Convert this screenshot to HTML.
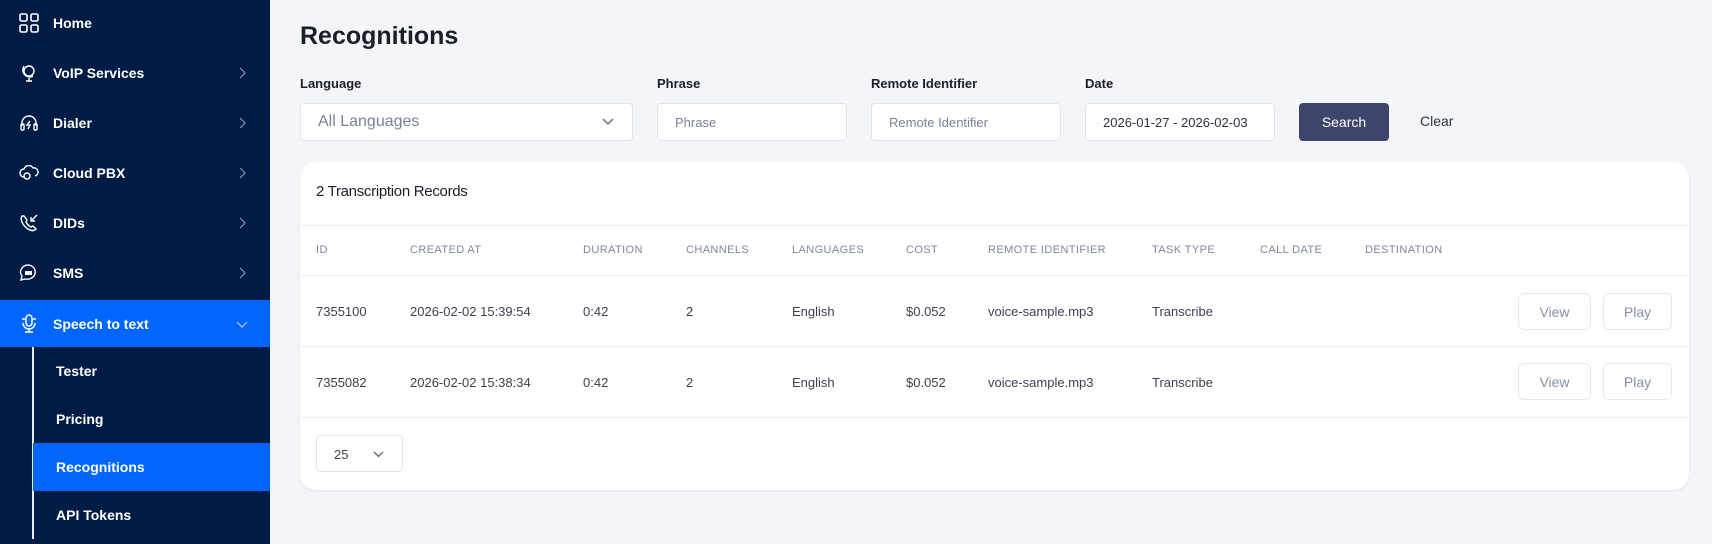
<!DOCTYPE html>
<html><head><meta charset="utf-8"><style>
*{box-sizing:border-box;margin:0;padding:0}
body{width:1712px;height:544px;overflow:hidden;background:#f4f5f9;font-family:"Liberation Sans",sans-serif;position:relative}
.sb{position:absolute;left:0;top:0;width:270px;height:544px;background:#011c44}
.it{position:absolute;left:0;width:270px;height:48px;color:#fff;font-weight:bold;font-size:14px;display:flex;align-items:center}
.it .ic{position:absolute;left:19px;top:14px;width:20px;height:20px}
.it .tx{position:absolute;left:53px}
.it .ch{position:absolute;left:236px;top:18px;width:12px;height:12px}
.sub{position:absolute;left:33px;width:237px;height:48px;color:#fff;font-weight:bold;font-size:14px;display:flex;align-items:center;padding-left:23px}
.vl{position:absolute;left:32px;top:347px;width:2px;height:192px;background:#e8ecf3}
.a{position:absolute}
h1{position:absolute;left:300px;top:22px;font-size:25px;font-weight:bold;color:#1c1f2a}
.lbl{position:absolute;top:76px;font-size:13px;font-weight:bold;color:#1c1f2a}
.inp{position:absolute;top:103px;height:38px;background:#fff;border:1px solid #e2e5ec;border-radius:4px;font-size:14px;color:#7a8296;padding:0 17px;display:flex;align-items:center}
.card{position:absolute;left:300px;top:162px;width:1389px;height:328px;background:#fff;border-radius:16px;box-shadow:0 1px 2px rgba(0,0,0,.08)}
.hl{position:absolute;left:300px;width:1389px;height:1px;background:#ebeef3}
.th{position:absolute;top:244px;font-size:11px;color:#7d879c;letter-spacing:.4px}
.td{position:absolute;font-size:13px;color:#3e4250}
.btn{position:absolute;height:37px;border:1px solid #e4e8ef;border-radius:6px;background:#fff;color:#868fa3;font-size:14px;display:flex;align-items:center;justify-content:center}
</style></head><body>
<div class="sb">
<div class="it" style="top:-1px"><svg class="ic" viewBox="0 0 20 20" fill="none" stroke="#fff" stroke-width="1.6"><rect x="1" y="1" width="7" height="7" rx="1.5"/><rect x="12" y="1" width="7" height="7" rx="1.5"/><rect x="1" y="12" width="7" height="7" rx="1.5"/><rect x="12" y="12" width="7" height="7" rx="1.5"/></svg><span class="tx">Home</span></div>
<div class="it" style="top:49px"><svg class="ic" viewBox="0 0 20 20" fill="none" stroke="#fff" stroke-width="1.4"><circle cx="10" cy="8" r="5"/><path d="M5 3 Q2 9 7 13 Q11 15 14 13 M10 15v3 M7 18h6"/></svg><span class="tx">VoIP Services</span><svg class="ch" viewBox="0 0 12 12" fill="none" stroke="#8a94a8" stroke-width="1.2"><path d="M4 1l5 5-5 5"/></svg></div>
<div class="it" style="top:99px"><svg class="ic" viewBox="0 0 20 20" fill="none" stroke="#fff" stroke-width="1.4"><path d="M3 13V10a7 7 0 0114 0v3"/><rect x="2" y="11" width="3" height="6" rx="1"/><rect x="15" y="11" width="3" height="6" rx="1"/><path d="M11 8l-3 4h3l-2 4"/></svg><span class="tx">Dialer</span><svg class="ch" viewBox="0 0 12 12" fill="none" stroke="#8a94a8" stroke-width="1.2"><path d="M4 1l5 5-5 5"/></svg></div>
<div class="it" style="top:149px"><svg class="ic" viewBox="0 0 20 20" fill="none" stroke="#fff" stroke-width="1.4"><path d="M5 14a4 4 0 010-8 5 5 0 019-1 4 4 0 012 8"/><circle cx="8" cy="13" r="3"/></svg><span class="tx">Cloud PBX</span><svg class="ch" viewBox="0 0 12 12" fill="none" stroke="#8a94a8" stroke-width="1.2"><path d="M4 1l5 5-5 5"/></svg></div>
<div class="it" style="top:199px"><svg class="ic" viewBox="0 0 20 20" fill="none" stroke="#fff" stroke-width="1.4"><path d="M3 3c-2 3 0 9 6 13 3 2 6 2 8 0l-3-3-2 1c-2-1-4-3-5-5l1-2-3-4z"/><path d="M18 2l-6 6M12 4v4h4"/></svg><span class="tx">DIDs</span><svg class="ch" viewBox="0 0 12 12" fill="none" stroke="#8a94a8" stroke-width="1.2"><path d="M4 1l5 5-5 5"/></svg></div>
<div class="it" style="top:249px"><svg class="ic" viewBox="0 0 20 20" fill="none" stroke="#fff" stroke-width="1.4"><path d="M10 2a8 7 0 00-7 11l-1 4 4-1a8 7 0 1004-14z"/><rect x="6" y="8" width="7" height="4" fill="#fff" stroke="none"/></svg><span class="tx">SMS</span><svg class="ch" viewBox="0 0 12 12" fill="none" stroke="#8a94a8" stroke-width="1.2"><path d="M4 1l5 5-5 5"/></svg></div>
<div class="it" style="top:300px;height:47px;background:#0066ff"><svg class="ic" viewBox="0 0 20 20" fill="none" stroke="#fff" stroke-width="1.5"><rect x="7" y="1" width="6" height="11" rx="3"/><path d="M4 9a6 6 0 0012 0M10 15v3M6 18h8M3 5h3M14 5h3"/></svg><span class="tx">Speech to text</span><svg class="ch" viewBox="0 0 12 12" fill="none" stroke="#b7cff7" stroke-width="1.2"><path d="M1 4l5 5 5-5"/></svg></div>
<div class="vl"></div>
<div class="sub" style="top:347px">Tester</div>
<div class="sub" style="top:395px">Pricing</div>
<div class="sub" style="top:443px;background:#0066ff">Recognitions</div>
<div class="sub" style="top:491px">API Tokens</div>
</div>

<h1>Recognitions</h1>
<div class="lbl" style="left:300px">Language</div>
<div class="lbl" style="left:657px">Phrase</div>
<div class="lbl" style="left:871px">Remote Identifier</div>
<div class="lbl" style="left:1085px">Date</div>
<div class="inp" style="left:300px;width:333px;font-size:16px">All Languages<svg style="position:absolute;right:18px;top:14px" width="12" height="8" viewBox="0 0 12 8" fill="none" stroke="#5a6275" stroke-width="1.3"><path d="M1 1l5 5 5-5"/></svg></div>
<div class="inp" style="left:657px;width:190px;font-size:13px">Phrase</div>
<div class="inp" style="left:871px;width:190px;font-size:13px">Remote Identifier</div>
<div class="inp" style="left:1085px;width:190px;font-size:13px;color:#2e3240">2026-01-27 - 2026-02-03</div>
<div class="a" style="left:1299px;top:103px;width:90px;height:38px;background:#3d456b;border-radius:4px;color:#fff;font-size:14px;display:flex;align-items:center;justify-content:center">Search</div>
<div class="a" style="left:1420px;top:113px;font-size:14px;color:#2e3240">Clear</div>

<div class="card"></div>
<div class="a" style="left:316px;top:183px;font-size:15px;color:#1c1f2a;letter-spacing:-.3px">2 Transcription Records</div>
<div class="hl" style="top:225px"></div>
<div class="th" style="left:316px">ID</div>
<div class="th" style="left:410px">CREATED AT</div>
<div class="th" style="left:583px">DURATION</div>
<div class="th" style="left:686px">CHANNELS</div>
<div class="th" style="left:792px">LANGUAGES</div>
<div class="th" style="left:906px">COST</div>
<div class="th" style="left:988px">REMOTE IDENTIFIER</div>
<div class="th" style="left:1152px">TASK TYPE</div>
<div class="th" style="left:1260px">CALL DATE</div>
<div class="th" style="left:1365px">DESTINATION</div>
<div class="hl" style="top:275px"></div>

<div class="td" style="left:316px;top:304px">7355100</div>
<div class="td" style="left:410px;top:304px">2026-02-02 15:39:54</div>
<div class="td" style="left:583px;top:304px">0:42</div>
<div class="td" style="left:686px;top:304px">2</div>
<div class="td" style="left:792px;top:304px">English</div>
<div class="td" style="left:906px;top:304px">$0.052</div>
<div class="td" style="left:988px;top:304px">voice-sample.mp3</div>
<div class="td" style="left:1152px;top:304px">Transcribe</div>
<div class="btn" style="left:1518px;top:293px;width:73px">View</div>
<div class="btn" style="left:1603px;top:293px;width:69px">Play</div>
<div class="hl" style="top:346px"></div>

<div class="td" style="left:316px;top:375px">7355082</div>
<div class="td" style="left:410px;top:375px">2026-02-02 15:38:34</div>
<div class="td" style="left:583px;top:375px">0:42</div>
<div class="td" style="left:686px;top:375px">2</div>
<div class="td" style="left:792px;top:375px">English</div>
<div class="td" style="left:906px;top:375px">$0.052</div>
<div class="td" style="left:988px;top:375px">voice-sample.mp3</div>
<div class="td" style="left:1152px;top:375px">Transcribe</div>
<div class="btn" style="left:1518px;top:363px;width:73px">View</div>
<div class="btn" style="left:1603px;top:363px;width:69px">Play</div>
<div class="hl" style="top:417px"></div>

<div class="a" style="left:316px;top:435px;width:87px;height:37px;border:1px solid #e2e5ec;border-radius:4px;font-size:13px;color:#3e4250;padding:11px 0 0 17px">25<svg style="position:absolute;left:56px;top:15px" width="11" height="7" viewBox="0 0 11 7" fill="none" stroke="#5a6275" stroke-width="1.3"><path d="M1 1l4.5 4.5L10 1"/></svg></div>
</body></html>
